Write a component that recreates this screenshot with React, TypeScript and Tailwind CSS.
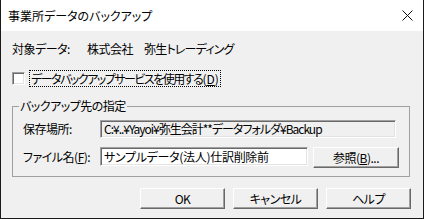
import React from "react";

const font = "font-['Noto_Sans_CJK_JP','Noto_Sans',sans-serif] [font-feature-settings:'palt']";

const btn =
  "h-[21px] w-[85px] bg-[#f0f0f0] border border-t-white border-l-white border-b-[#696969] border-r-[#696969] shadow-[inset_-1px_-1px_0_#a0a0a0] flex items-center justify-center text-[12px] leading-[14px] text-black";

const sunken =
  "border border-t-[#a0a0a0] border-l-[#a0a0a0] border-b-white border-r-white shadow-[inset_1px_1px_0_#696969,inset_-1px_-1px_0_#e3e3e3] flex items-center px-[3px] text-[12px] leading-[14px] whitespace-nowrap overflow-hidden";

const App: React.FC = () => {
  return (
    <div className={`w-[424px] h-[219px] flex flex-col border-x border-b border-[#1a1a1a] bg-[#f0f0f0] text-black ${font}`}>
      {/* Title bar */}
      <div className="h-[31px] bg-white flex items-center justify-between pl-[7px] pr-[9px]">
        <span className="text-[12px] leading-[14px]">事業所データのバックアップ</span>
        <svg width="11" height="11" viewBox="0 0 11 11" className="mr-[1px]">
          <path d="M0.5 0.5 L10.5 10.5 M10.5 0.5 L0.5 10.5" stroke="#111" strokeWidth="1" />
        </svg>
      </div>

      {/* Body */}
      <div className="flex-1 flex flex-col pl-[11px] pt-[11px] text-[12px] leading-[14px] tracking-[-0.5px]">
        <div className="flex h-[14px]">
          <span className="w-[75px]">対象データ:</span>
          <span>株式会社</span>
          <span className="ml-[11px] tracking-[-0.8px]">弥生トレーディング</span>
        </div>

        <div className="flex items-center mt-[14px] h-[17px]">
          <span className="w-[13px] h-[13px] bg-white border border-t-[#a0a0a0] border-l-[#a0a0a0] border-b-white border-r-white shadow-[inset_1px_1px_0_#696969,inset_-1px_-1px_0_#e3e3e3]" />
          <span className="ml-[4px] h-[17px] flex items-center px-[1px] border border-dotted border-black">
            <span className="tracking-[-1.5px]">データバックアップサービスを使用する</span>
            <span className="tracking-[0px]">(<u>D</u>)</span>
          </span>
        </div>

        <fieldset className="mt-[12px] w-[398px] border border-[#a0a0a0] p-0 m-0">
          <legend className="ml-[6px] px-[1px] text-[12px] leading-[14px]">バックアップ先の指定</legend>
          <div className="pt-[7px] pb-[8px] pl-[10px] flex flex-col">
            <div className="flex items-center h-[18px]">
              <span className="w-[77px]">保存場所:</span>
              <div className={`${sunken} w-[296px] h-[18px] bg-[#f0f0f0] tracking-[-1px]`}>
                C:¥..¥Yayoi¥弥生会計**データフォルダ¥Backup
              </div>
            </div>
            <div className="flex items-start mt-[9px]">
              <span className="w-[77px] h-[19px] flex items-center">
                ファイル名(<u>F</u>):
              </span>
              <div className={`${sunken} w-[208px] h-[19px] bg-white tracking-[-0.3px]`}>
                サンプルデータ(法人)仕訳削除前
              </div>
              <button className={`${btn} ml-[5px] w-[86px]`}>
                参照(<u>B</u>)...
              </button>
            </div>
          </div>
        </fieldset>

        <div className="flex justify-end gap-[8px] pr-[12px] mt-[11px]">
          <button className={btn}>OK</button>
          <button className={btn}>キャンセル</button>
          <button className={btn}>ヘルプ</button>
        </div>
      </div>
    </div>
  );
};

export default App;
